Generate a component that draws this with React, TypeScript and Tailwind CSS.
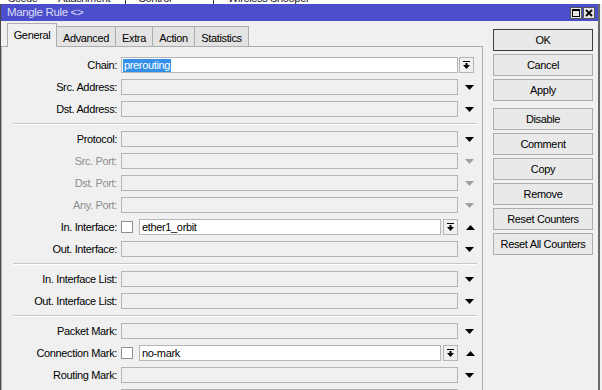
import React from "react";

type Row =
  | { kind: "chain"; label: string; value: string }
  | { kind: "plain"; label: string; disabled?: boolean }
  | { kind: "check"; label: string; value: string }
  | { kind: "sep" };

const rows: Row[] = [
  { kind: "chain", label: "Chain:", value: "prerouting" },
  { kind: "plain", label: "Src. Address:" },
  { kind: "plain", label: "Dst. Address:" },
  { kind: "sep" },
  { kind: "plain", label: "Protocol:" },
  { kind: "plain", label: "Src. Port:", disabled: true },
  { kind: "plain", label: "Dst. Port:", disabled: true },
  { kind: "plain", label: "Any. Port:", disabled: true },
  { kind: "check", label: "In. Interface:", value: "ether1_orbit" },
  { kind: "plain", label: "Out. Interface:" },
  { kind: "sep" },
  { kind: "plain", label: "In. Interface List:" },
  { kind: "plain", label: "Out. Interface List:" },
  { kind: "sep" },
  { kind: "plain", label: "Packet Mark:" },
  { kind: "check", label: "Connection Mark:", value: "no-mark" },
  { kind: "plain", label: "Routing Mark:" },
  { kind: "plain", label: "" },
];

const tabs = [
  { name: "Advanced", w: "w-[59px]" },
  { name: "Extra", w: "w-[37px]" },
  { name: "Action", w: "w-[42px]" },
  { name: "Statistics", w: "w-[54px]" },
];

// buttons on the right, gap class decides spacing above
const buttons = [
  { name: "OK", cls: "mt-0 border-[#3c3c3c]" },
  { name: "Cancel", cls: "mt-[3px] border-[#adadad]" },
  { name: "Apply", cls: "mt-[3px] border-[#adadad]" },
  { name: "Disable", cls: "mt-[7px] border-[#adadad]" },
  { name: "Comment", cls: "mt-[3px] border-[#adadad]" },
  { name: "Copy", cls: "mt-[3px] border-[#adadad]" },
  { name: "Remove", cls: "mt-[3px] border-[#adadad]" },
  { name: "Reset Counters", cls: "mt-[3px] border-[#adadad]" },
  { name: "Reset All Counters", cls: "mt-[3px] border-[#adadad]" },
];

function Down({ gray }: { gray?: boolean }) {
  return (
    <svg width="9" height="5" viewBox="0 0 9 5">
      <polygon points="0,0 9,0 4.5,5" fill={gray ? "#a0a0a0" : "#000"} />
    </svg>
  );
}

function Up() {
  return (
    <svg width="9" height="5" viewBox="0 0 9 5">
      <polygon points="0,5 9,5 4.5,0" fill="#000" />
    </svg>
  );
}

function DropButton() {
  return (
    <div className="w-[15px] h-[16px] border border-[#b4b4b4] bg-[#f0f0f0] flex items-center justify-center">
      <svg width="7" height="8" viewBox="0 0 7 8">
        <rect x="0" y="0" width="7" height="1" fill="#000" />
        <rect x="2.5" y="2" width="2" height="2" fill="#000" />
        <polygon points="0,4 7,4 3.5,8" fill="#000" />
      </svg>
    </div>
  );
}

function FormRow({ row }: { row: Row }) {
  if (row.kind === "sep") {
    return (
      <div className="ml-[11px] w-[464px] h-[2px] border-t border-[#c8c8c8] border-b border-b-white" />
    );
  }
  const labelColor =
    row.kind === "plain" && row.disabled ? "text-[#8d8d8d]" : "text-black";
  return (
    <div className="flex items-center h-[16px]">
      <div className={`w-[115px] text-right leading-[16px] ${labelColor}`}>
        {row.label}
      </div>
      {row.kind === "chain" && (
        <>
          <div className="ml-[4px] w-[337px] h-[16px] border border-[#b4b4b4] bg-white flex items-center pl-[1px]">
            <span className="bg-[#3390e8] text-white leading-[13px] px-[1px]">
              {row.value}
            </span>
          </div>
          <div className="ml-[1px]">
            <DropButton />
          </div>
        </>
      )}
      {row.kind === "plain" && (
        <>
          <div className="ml-[4px] w-[337px] h-[16px] border border-[#b4b4b4] bg-[#f0f0f0]" />
          <div className="ml-[7px] flex items-center">
            <Down gray={row.disabled} />
          </div>
        </>
      )}
      {row.kind === "check" && (
        <>
          <div className="ml-[4px] w-[12px] h-[12px] border border-[#8f8f8f] bg-white" />
          <div className="ml-[6px] w-[302px] h-[16px] border border-[#b4b4b4] bg-white flex items-center pl-[2px] leading-[14px]">
            {row.value}
          </div>
          <div className="ml-[2px]">
            <DropButton />
          </div>
          <div className="ml-[8px] flex items-center">
            <Up />
          </div>
        </>
      )}
    </div>
  );
}

export default function App() {
  return (
    <div
      className="w-[602px] h-[390px] overflow-hidden bg-[#f0f0f0] text-[11px] tracking-[-0.35px] text-black"
      style={{ fontFamily: '"Liberation Sans", Arial, sans-serif' }}
    >
      {/* strip of the window behind */}
      <div className="h-[4px] bg-white overflow-hidden relative">
        <div className="flex items-end h-[4px] text-[#222]">
          <div className="w-[36px] pl-[8px] leading-[12px] -mt-[8px]">Scede</div>
          <div className="w-[90px] pl-[22px] leading-[12px] -mt-[8px] border-r border-[#333]">
            Attachment
          </div>
          <div className="w-[88px] pl-[12px] leading-[12px] -mt-[8px] border-r border-[#333]">
            Wireless Control
          </div>
          <div className="w-[100px] pl-[14px] leading-[12px] -mt-[8px]">
            Wireless Snooper
          </div>
        </div>
      </div>

      <div className="w-[600px] h-[386px] border-l border-r-2 border-l-[#4a4a4a] border-r-[#6a6a6a] flex flex-col">
        {/* title bar */}
        <div className="h-[21px] bg-[#4b4fcb] flex items-center pl-[6px] pr-[3px]">
          <span className="text-[#dcdcf8] text-[11.5px]">Mangle Rule &lt;&gt;</span>
          <div className="ml-auto flex gap-[1px] mt-[1px]">
            <div className="w-[12px] h-[12px] bg-[#e6e6e6] border border-[#555] flex items-center justify-center">
              <div className="w-[8px] h-[8px] border border-black border-t-2" />
            </div>
            <div className="w-[12px] h-[12px] bg-[#e6e6e6] border border-[#555] flex items-center justify-center">
              <svg width="8" height="8" viewBox="0 0 8 8">
                <path d="M1 1 L7 7 M7 1 L1 7" stroke="#000" strokeWidth="1.8" />
              </svg>
            </div>
          </div>
        </div>

        {/* body */}
        <div className="flex flex-1">
          <div className="w-[482px] flex flex-col">
            <div className="h-[25px] flex items-end pl-[6px] relative z-10">
              <div className="w-[50px] h-[24px] -mb-px border border-b-0 border-[#adadad] bg-[#f0f0f0] flex items-center justify-center pb-[1px]">
                General
              </div>
              {tabs.map((t) => (
                <div
                  key={t.name}
                  className={`${t.w} h-[20px] border-t border-r border-[#adadad] bg-[#e3e3e3] flex items-center justify-center pt-[2px]`}
                >
                  {t.name}
                </div>
              ))}
            </div>
            <div className="flex-1 border-t border-r border-l border-[#adadad] pt-[10px] flex flex-col gap-[6px]">
              {rows.map((r, i) => (
                <FormRow key={i} row={r} />
              ))}
            </div>
          </div>

          <div className="ml-[10px] pt-[8px] flex flex-col">
            {buttons.map((b) => (
              <div
                key={b.name}
                className={`w-[100px] h-[22px] border bg-[#e9e9e9] flex items-center justify-center ${b.cls}`}
              >
                {b.name}
              </div>
            ))}
          </div>
        </div>
      </div>
    </div>
  );
}
